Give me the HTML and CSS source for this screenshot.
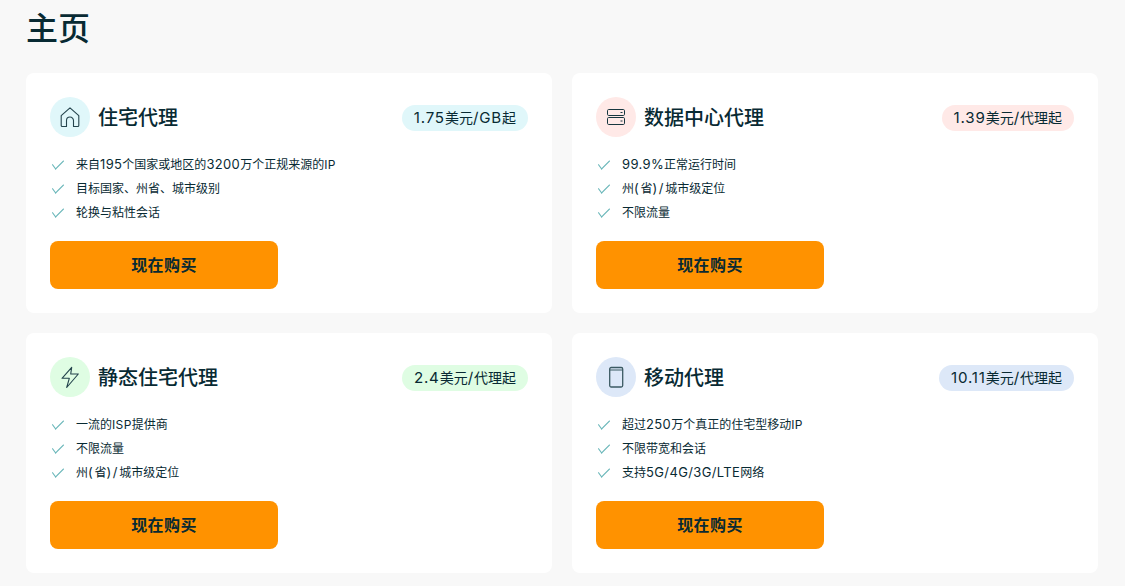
FILE: index.html
```html
<!DOCTYPE html>
<html lang="zh-CN">
<head>
  <meta charset="UTF-8">
  <meta name="viewport" content="width=device-width, initial-scale=1.0">
  <title>主页</title>
  <link rel="stylesheet" href="styles.css">
</head>
<body>

<h1 class="page-title">主页</h1>

<div class="cards">
  <div class="card">
    <div class="card-head">
      <span class="icon icon-home">
        <svg width="24" height="24" viewBox="0 0 24 24" fill="none" stroke="#24444d" stroke-width="1.1" stroke-linejoin="round"><path d="M3.200 10.600 12 2.800l8.800 7.800V20.500a1 1 0 0 1-1 1H15.500V15.500a3.500 3.500 0 0 0-7 0v6H4.200a1 1 0 0 1-1-1z"/></svg>
      </span>
      <h2>住宅代理</h2>
      <span class="price price-home"><span class="num">1.75</span>美元<span class="num">/GB</span>起</span>
    </div>
    <ul class="features">
      <li>来自<span class="num">195</span>个国家或地区的<span class="num">3200</span>万个正规来源的<span class="cap">IP</span></li>
      <li>目标国家、州省、城市级别</li>
      <li>轮换与粘性会话</li>
    </ul>
    <button class="btn">现在购买</button>
  </div>

  <div class="card">
    <div class="card-head">
      <span class="icon icon-server">
        <svg width="24" height="24" viewBox="0 0 24 24" fill="none" stroke="#17363f" stroke-width="1"><rect x="3.500" y="4.500" width="17" height="6" rx="1.200"/><rect x="3.500" y="12.500" width="17" height="7" rx="1.200"/><path d="M16.500 7.500h2M16.500 16h2"/></svg>
      </span>
      <h2>数据中心代理</h2>
      <span class="price price-server"><span class="num">1.39</span>美元<span class="num">/</span>代理起</span>
    </div>
    <ul class="features">
      <li><span class="num">99.9%</span>正常运行时间</li>
      <li>州<span class="paren">(</span>省<span class="paren">)/</span>城市级定位</li>
      <li>不限流量</li>
    </ul>
    <button class="btn">现在购买</button>
  </div>

  <div class="card">
    <div class="card-head">
      <span class="icon icon-static">
        <svg width="24" height="24" viewBox="0 0 24 24" fill="none" stroke="#24444d" stroke-width="1.1" stroke-linejoin="round"><path d="M13.700 2.300 4 13.300h7.300L8.700 22.500 20.300 9h-7.600z"/></svg>
      </span>
      <h2>静态住宅代理</h2>
      <span class="price price-static"><span class="num">2.4</span>美元<span class="num">/</span>代理起</span>
    </div>
    <ul class="features">
      <li>一流的<span class="cap">ISP</span>提供商</li>
      <li>不限流量</li>
      <li>州<span class="paren">(</span>省<span class="paren">)/</span>城市级定位</li>
    </ul>
    <button class="btn">现在购买</button>
  </div>

  <div class="card">
    <div class="card-head">
      <span class="icon icon-mobile">
        <svg width="24" height="24" viewBox="0 0 24 24" fill="none" stroke="#3b5a63" stroke-width="1.3"><rect x="5.700" y="2.500" width="13" height="19.500" rx="1.500"/><path d="M5.700 5h13" stroke-width="1"/></svg>
      </span>
      <h2>移动代理</h2>
      <span class="price price-mobile"><span class="num">10.11</span>美元<span class="num">/</span>代理起</span>
    </div>
    <ul class="features">
      <li>超过<span class="num">250</span>万个真正的住宅型移动<span class="cap">IP</span></li>
      <li>不限带宽和会话</li>
      <li>支持<span class="num">5G/4G/3G/LTE</span>网络</li>
    </ul>
    <button class="btn">现在购买</button>
  </div>
</div>

</body>
</html>
```

FILE: styles.css
```css
body {
  font-family: Inter, "Noto Sans CJK SC", sans-serif;
  margin: 0;
  padding: 9px 27px 13px 26px;
  background-color: #f8f8f8;
  color: #082a33;
}
.page-title {
  margin: 0 0 24px;
  font-size: 32px;
  line-height: 40px;
  font-weight: 500;
}
.cards {
  display: grid;
  grid-template-columns: 1fr 1fr;
  gap: 20px;
}
.card {
  height: 240px;
  box-sizing: border-box;
  padding: 24px;
  background-color: #fff;
  border-radius: 8px;
}
.card-head {
  display: flex;
  align-items: center;
  height: 40px;
}
.card-head h2 {
  margin: 2px 0 0 8px;
  flex: 1;
  font-size: 20px;
  line-height: 28px;
  font-weight: 500;
}
.icon {
  width: 40px;
  height: 40px;
  border-radius: 50%;
  display: flex;
  align-items: center;
  justify-content: center;
}
.icon-home, .price-home {
  background-color: #e0f7fa;
}
.icon-server, .price-server {
  background-color: #ffe9e7;
}
.icon-static, .price-static {
  background-color: #dffde3;
}
.icon-mobile, .price-mobile {
  background-color: #dde8f8;
}
.price {
  margin-top: 2px;
  padding: 0 12px;
  height: 26px;
  line-height: 26px;
  border-radius: 13px;
  font-size: 14px;
}
.price .num {
  letter-spacing: .055em;
}
.features {
  list-style: none;
  margin: 16px 0 16px;
  padding: 0;
}
.features li {
  position: relative;
  height: 24px;
  line-height: 24px;
  padding-left: 26px;
  font-size: 12px;
}
.features li::before {
  content: "";
  position: absolute;
  left: 2px;
  top: 7px;
  width: 11px;
  height: 5px;
  border-left: 1px solid #66b5b8;
  border-bottom: 1px solid #66b5b8;
  transform: rotate(-45deg) skewX(-8deg);
}
.num {
  font-size: 1.08em;
  letter-spacing: .03em;
  line-height: 1;
}
.paren {
  font-size: 1.08em;
  letter-spacing: .13em;
  line-height: 1;
}
.cap {
  letter-spacing: .35px;
}
.btn {
  display: block;
  width: 228px;
  height: 48px;
  padding: 0 0 2px;
  border: none;
  border-radius: 8px;
  background-color: #ff9200;
  color: #082a33;
  font-family: inherit;
  font-size: 16px;
  font-weight: 600;
  letter-spacing: .4px;
  cursor: pointer;
}
```
